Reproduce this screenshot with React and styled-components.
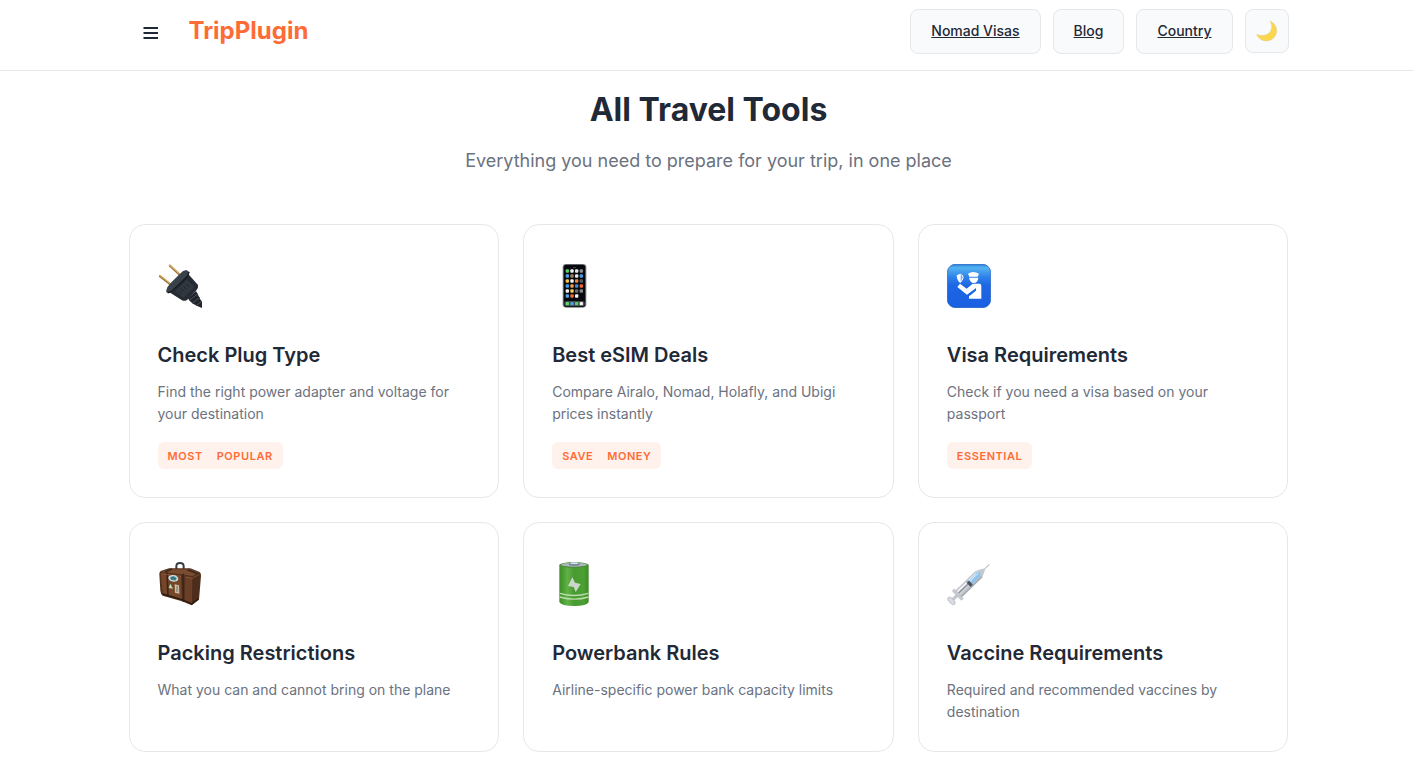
import styled, { createGlobalStyle } from "styled-components";

const GlobalStyle = createGlobalStyle`
  * {
    box-sizing: border-box;
  }

  body {
    margin: 0;
    background: #fff;
    color: #1f2937;
    font-family: Inter, "Liberation Sans", sans-serif;
  }
`;

// All tools that are shown in the grid
const tools = [
  {
    title: "Check Plug Type",
    text: "Find the right power adapter and voltage for your destination",
    badge: ["Most", "Popular"],
    Icon: PlugIcon,
  },
  {
    title: "Best eSIM Deals",
    text: "Compare Airalo, Nomad, Holafly, and Ubigi prices instantly",
    badge: ["Save", "Money"],
    Icon: PhoneIcon,
  },
  {
    title: "Visa Requirements",
    text: "Check if you need a visa based on your passport",
    badge: ["Essential"],
    Icon: PassportIcon,
  },
  {
    title: "Packing Restrictions",
    text: "What you can and cannot bring on the plane",
    Icon: LuggageIcon,
  },
  {
    title: "Powerbank Rules",
    text: "Airline-specific power bank capacity limits",
    Icon: BatteryIcon,
  },
  {
    title: "Vaccine Requirements",
    text: "Required and recommended vaccines by destination",
    Icon: SyringeIcon,
  },
];

export default function App() {
  return (
    <>
      <GlobalStyle />
      <Header>
        <HeaderInner>
          <Brand>
            <MenuButton type="button" aria-label="Open menu">
              <svg width="16" height="16" viewBox="0 0 16 16" aria-hidden="true">
                <path
                  d="M0.5 3h14.5M0.5 8h14.5M0.5 13h14.5"
                  stroke="#1f2937"
                  strokeWidth="2"
                />
              </svg>
            </MenuButton>
            <Logo href="#home">TripPlugin</Logo>
          </Brand>
          <Nav>
            <NavLink href="#nomad-visas">Nomad Visas</NavLink>
            <NavLink href="#blog">Blog</NavLink>
            <NavLink href="#country">Country</NavLink>
            <ThemeButton type="button" aria-label="Toggle dark mode">
              <MoonIcon />
            </ThemeButton>
          </Nav>
        </HeaderInner>
      </Header>
      <Main>
        <Container>
          <Intro>
            <Title>All Travel Tools</Title>
            <Subtitle>
              Everything you need to prepare for your trip, in one place
            </Subtitle>
          </Intro>
          <Grid>
            {tools.map(({ title, text, badge, Icon }) => (
              <Card key={title} href="#tool">
                <IconBlock>
                  <Icon />
                </IconBlock>
                <CardTitle>{title}</CardTitle>
                <CardText>{text}</CardText>
                {badge && (
                  <Badge>
                    {badge.map((word) => (
                      <span key={word}>{word}</span>
                    ))}
                  </Badge>
                )}
              </Card>
            ))}
          </Grid>
        </Container>
      </Main>
    </>
  );
}

function MoonIcon() {
  return (
    <svg width="22" height="22" viewBox="0 0 66 66" aria-hidden="true">
      <path
        d="M42 3A31 31 0 1 1 2 43C18 50 34 46 42 36C49 27 49 14 42 3Z"
        fill="#fad74f"
        stroke="#dfb98a"
        strokeWidth="1"
      />
    </svg>
  );
}

function PlugIcon() {
  return (
    <svg width="44" height="44" viewBox="24 27 132 132" aria-hidden="true">
      <path d="M28 62L66 92M58 31L92 62" stroke="#8a642c" strokeWidth="6" />
      <path d="M28 60L66 90M58 29L92 60" stroke="#d9a95a" strokeWidth="4" />
      <path
        d="M114 130C122 144 136 152 156 159V142C150 132 146 122 138 108Z"
        fill="#20252b"
      />
      <path
        d="M118 136L144 116M126 145L150 127M138 152L156 138"
        stroke="#4a515a"
        strokeWidth="3"
      />
      <path d="M56 110L112 54L144 90Q146 98 139 106L112 134Q104 140 96 136Z" fill="#262c33" />
      <path d="M76 108L111 74L134 96L100 128Z" fill="#303840" />
      <path d="M86 108L94 116M93 101L102 110M101 94L110 103M109 87L118 96" stroke="#1b2127" strokeWidth="3" />
      <path
        d="M48 109Q51 94 62 84L90 56Q99 46 109 45L118 51Q118 60 111 67L70 109Q60 117 52 114Z"
        fill="#39414a"
      />
      <path d="M54 113Q64 112 72 103L108 68Q116 60 117 51" stroke="#14191e" strokeWidth="4" fill="none" />
    </svg>
  );
}

// Colours of the home screen, row by row
const screenColors = [
  ["#50d465", "#f2f2f5", "#e2e4ec", "#8e9097"],
  ["#4aa5ee", "#9c7c62", "#e8e8eb", "#4b9ae5"],
  ["#f4c64f", "#f5f5f5", "#ee8443", "#565b66"],
  ["#489fe9", "#f29a50", "#458bd2", "#ef642d"],
  ["#f3f3f3", "#f0cc58", "#676a72", "#85878d"],
  ["#52a9e8", "#f16b3b", "#f4f4f4"],
];

function PhoneIcon() {
  return (
    <svg width="44" height="44" viewBox="21 27 132 132" aria-hidden="true">
      <rect x="53" y="27" width="71" height="131" rx="10" fill="#7d828b" />
      <rect x="56" y="29" width="65" height="127" rx="8" fill="#08090c" />
      <path d="M84 38h9" stroke="#3d4148" strokeWidth="3" />
      {screenColors.map((row, y) =>
        row.map((color, x) => (
          <rect
            key={`${x}-${y}`}
            x={62 + x * 14}
            y={43 + y * 15}
            width="10"
            height="10"
            rx="3"
            fill={color}
          />
        ))
      )}
      <rect x="58" y="138" width="61" height="16" rx="6" fill="#474b52" />
      {["#55d962", "#4aa3e8", "#4ed362", "#f0f0f2"].map((color, x) => (
        <rect key={x} x={62 + x * 14} y="141" width="10" height="10" rx="3" fill={color} />
      ))}
    </svg>
  );
}

function PassportIcon() {
  return (
    <svg width="44" height="44" viewBox="21 27 132 132" aria-hidden="true">
      <defs>
        <linearGradient id="sign" x1="0" y1="0" x2="0" y2="1">
          <stop offset="0" stopColor="#2a83d8" />
          <stop offset="0.08" stopColor="#54b3f1" />
          <stop offset="0.3" stopColor="#2e80e9" />
          <stop offset="0.5" stopColor="#1d66e4" />
          <stop offset="1" stopColor="#1a5fe2" />
        </linearGradient>
      </defs>
      <rect x="22" y="28" width="130" height="130" rx="24" fill="url(#sign)" stroke="#1b58bd" strokeWidth="2" />
      <path d="M84 56Q99 46 117 56L113 65H88Z" fill="#fff" />
      <path d="M87 68H115Q114 83 101 84Q90 83 87 68Z" fill="#fff" />
      <path d="M50 61L61 56Q69 58 71 66Q70 77 61 84Q51 78 50 61Z" fill="#fff" />
      <path d="M62 58Q67 61 68 67Q66 75 62 80Z" fill="#79adf0" />
      <path
        d="M52 96L60 86L80 101L98 86H119Q124 87 124 93V131H87V123L108 106V99L81 119Z"
        fill="#fff"
      />
      <path d="M88 121L107 105" stroke="#1d66e4" strokeWidth="4" />
    </svg>
  );
}

function LuggageIcon() {
  return (
    <svg width="44" height="44" viewBox="24 30 132 132" aria-hidden="true">
      <path d="M79 53V43Q79 33 90 33Q101 33 101 43V55" fill="none" stroke="#343b40" strokeWidth="6" />
      <path d="M32 57L57 49L121 49L149 60Q154 64 153 72L147 143L125 160L96 148L38 131Q32 126 31 116L28 66Q28 60 32 57Z" fill="#55321f" />
      <path d="M32 60L55 52L119 52L147 62L127 72L96 67Z" fill="#794c30" />
      <path d="M32 63L93 71L95 143L39 127Z" fill="#764629" />
      <path d="M106 73L127 77L126 153L104 145Z" fill="#6b3f25" />
      <path d="M128 77L150 65L145 140L126 157Z" fill="#4c2d1b" />
      <path d="M45 59L66 51M51 62L54 133M99 65L100 149M112 53L145 66" stroke="#38271d" strokeWidth="5" />
      <path d="M38 126L96 143L126 156L145 140" fill="none" stroke="#2b1a12" strokeWidth="4" />
      <path d="M37 66L93 73M106 75L127 79L148 67" stroke="#936043" strokeWidth="2" fill="none" />
      <ellipse cx="70" cy="79" rx="15" ry="10" fill="#d8e0dc" transform="rotate(10 70 79)" />
      <ellipse cx="70" cy="79" rx="10" ry="6" fill="#438ca8" transform="rotate(10 70 79)" />
      <path d="M64 81L70 76L76 83" stroke="#385b42" strokeWidth="3" fill="none" />
      <path d="M56 108L61 95L69 110Z" fill="#b8ddba" />
      <path d="M74 97L87 100L88 125L75 122Z" fill="#d2c3b0" />
      <path d="M81 101L79 120M82 101L84 121" stroke="#7c7167" strokeWidth="2" />
    </svg>
  );
}

function BatteryIcon() {
  return (
    <svg width="44" height="44" viewBox="21 30 132 132" aria-hidden="true">
      <defs>
        <linearGradient id="cell">
          <stop offset="0" stopColor="#418c2c" />
          <stop offset="0.15" stopColor="#4ba333" />
          <stop offset="0.28" stopColor="#62b047" />
          <stop offset="0.5" stopColor="#489b31" />
          <stop offset="0.83" stopColor="#4ba032" />
          <stop offset="1" stopColor="#3f882b" />
        </linearGradient>
      </defs>
      <path d="M43 39V150Q48 162 88 162Q126 162 131 150V39Z" fill="url(#cell)" />
      <ellipse cx="87" cy="39" rx="44" ry="9" fill="#528b3e" />
      <ellipse cx="87" cy="38" rx="38" ry="6" fill="#abb6bc" />
      <ellipse cx="88" cy="36" rx="16" ry="5" fill="#657783" />
      <ellipse cx="88" cy="34" rx="13" ry="3" fill="#d2e4ee" />
      <path d="M82 76L69 102L86 105L92 120L107 96L90 92Z" fill="#cbd8c9" />
      <path d="M44 124Q88 137 130 124M44 135Q88 148 130 135" fill="none" stroke="#b9dbaa" strokeWidth="4" />
    </svg>
  );
}

function SyringeIcon() {
  return (
    <svg width="44" height="44" viewBox="21 30 132 132" aria-hidden="true">
      <defs>
        <linearGradient id="glass" x1="0" y1="0" x2="0" y2="1">
          <stop offset="0" stopColor="#b5b9c0" />
          <stop offset="0.25" stopColor="#eceef1" />
          <stop offset="0.65" stopColor="#cdd1d6" />
          <stop offset="1" stopColor="#9a9fa8" />
        </linearGradient>
      </defs>
      {/* drawn lying down, then turned so that the needle points up */}
      <g transform="translate(33 148) rotate(-44)">
        <path d="M132 0H160" stroke="#b6bbc2" strokeWidth="3" />
        <path d="M116 -14L138 -4V4L116 14Z" fill="#c2c8cf" />
        <path d="M3 -5H30V5H3Z" fill="#c4c8cf" />
        <rect x="30" y="-14" width="89" height="28" rx="4" fill="url(#glass)" />
        <path d="M80 -9H116L122 0L116 7H80Z" fill="#8fc3eb" />
        <path d="M82 -4H116" stroke="#d3edff" strokeWidth="3" />
        <rect x="72" y="-10" width="10" height="20" rx="3" fill="#4d535d" />
        <path d="M34 -2H72" stroke="#878c95" strokeWidth="4" />
        <path d="M36 -8H112" stroke="#fff" strokeWidth="2" />
        <rect x="24" y="-20" width="9" height="40" rx="3" fill="#c6cad0" stroke="#a3a8b0" strokeWidth="1" />
        <ellipse cx="2" cy="0" rx="7" ry="14" fill="#d9dce1" stroke="#acb0b8" strokeWidth="2" />
      </g>
    </svg>
  );
}

const Header = styled.header`
  padding: 9px 24px 16px 28px;
  border-bottom: 1px solid #e5e7eb;
`;

const Container = styled.div`
  max-width: 1160px;
  margin: 0 auto;
`;

const HeaderInner = styled(Container)`
  display: flex;
  align-items: flex-start;
  justify-content: space-between;
`;

const Brand = styled.div`
  display: flex;
  align-items: center;
  gap: 16px;
`;

const MenuButton = styled.button`
  display: grid;
  place-items: center;
  width: 44px;
  height: 44px;
  padding: 4px 0 0;
  border: 0;
  background: none;
  cursor: pointer;
`;

const Logo = styled.a`
  color: #ff6b35;
  font-size: 24px;
  font-weight: 700;
  line-height: 28px;
  text-decoration: none;
`;

const Nav = styled.nav`
  display: flex;
  align-items: flex-start;
  gap: 12px;
`;

const NavLink = styled.a`
  padding: 10px 20px 11px;
  border: 1px solid #e5e7eb;
  border-radius: 8px;
  background: #f9fafb;
  color: #1f2937;
  font-size: 14px;
  font-weight: 500;
  line-height: 22px;
`;

const ThemeButton = styled.button`
  display: grid;
  place-items: center;
  width: 44px;
  height: 44px;
  padding: 0;
  border: 1px solid #e5e7eb;
  border-radius: 8px;
  background: #f9fafb;
  cursor: pointer;
`;

const Main = styled.main`
  padding: 15px 24px 48px 28px;
`;

const Intro = styled.div`
  display: grid;
  gap: 12px;
  margin-bottom: 49px;
  text-align: center;
`;

const Title = styled.h1`
  margin: 0;
  font-size: 32px;
  font-weight: 700;
  line-height: 48px;
`;

const Subtitle = styled.p`
  margin: 0;
  color: #6b7280;
  font-size: 18px;
  line-height: 29px;
`;

const Grid = styled.div`
  display: grid;
  grid-template-columns: repeat(3, 1fr);
  gap: 24px;
`;

const Card = styled.a`
  padding: 28px;
  border: 1px solid #e5e7eb;
  border-radius: 16px;
  background: #fff;
  color: inherit;
  text-decoration: none;
`;

const IconBlock = styled.div`
  display: flex;
  align-items: center;
  height: 66px;
  margin-bottom: 20px;
`;

const CardTitle = styled.h3`
  margin: 0 0 10px;
  font-size: 20px;
  font-weight: 600;
  line-height: 32px;
`;

const CardText = styled.p`
  margin: 0;
  color: #6b7280;
  font-size: 14px;
  line-height: 22px;
`;

const Badge = styled.div`
  display: flex;
  gap: 14px;
  width: fit-content;
  margin-top: 17px;
  padding: 6px 10px 4px;
  border-radius: 6px;
  background: #fff2ed;
  color: #ff6b35;
  font-size: 11px;
  font-weight: 600;
  line-height: 17px;
  letter-spacing: 0.05em;
  text-transform: uppercase;
`;
